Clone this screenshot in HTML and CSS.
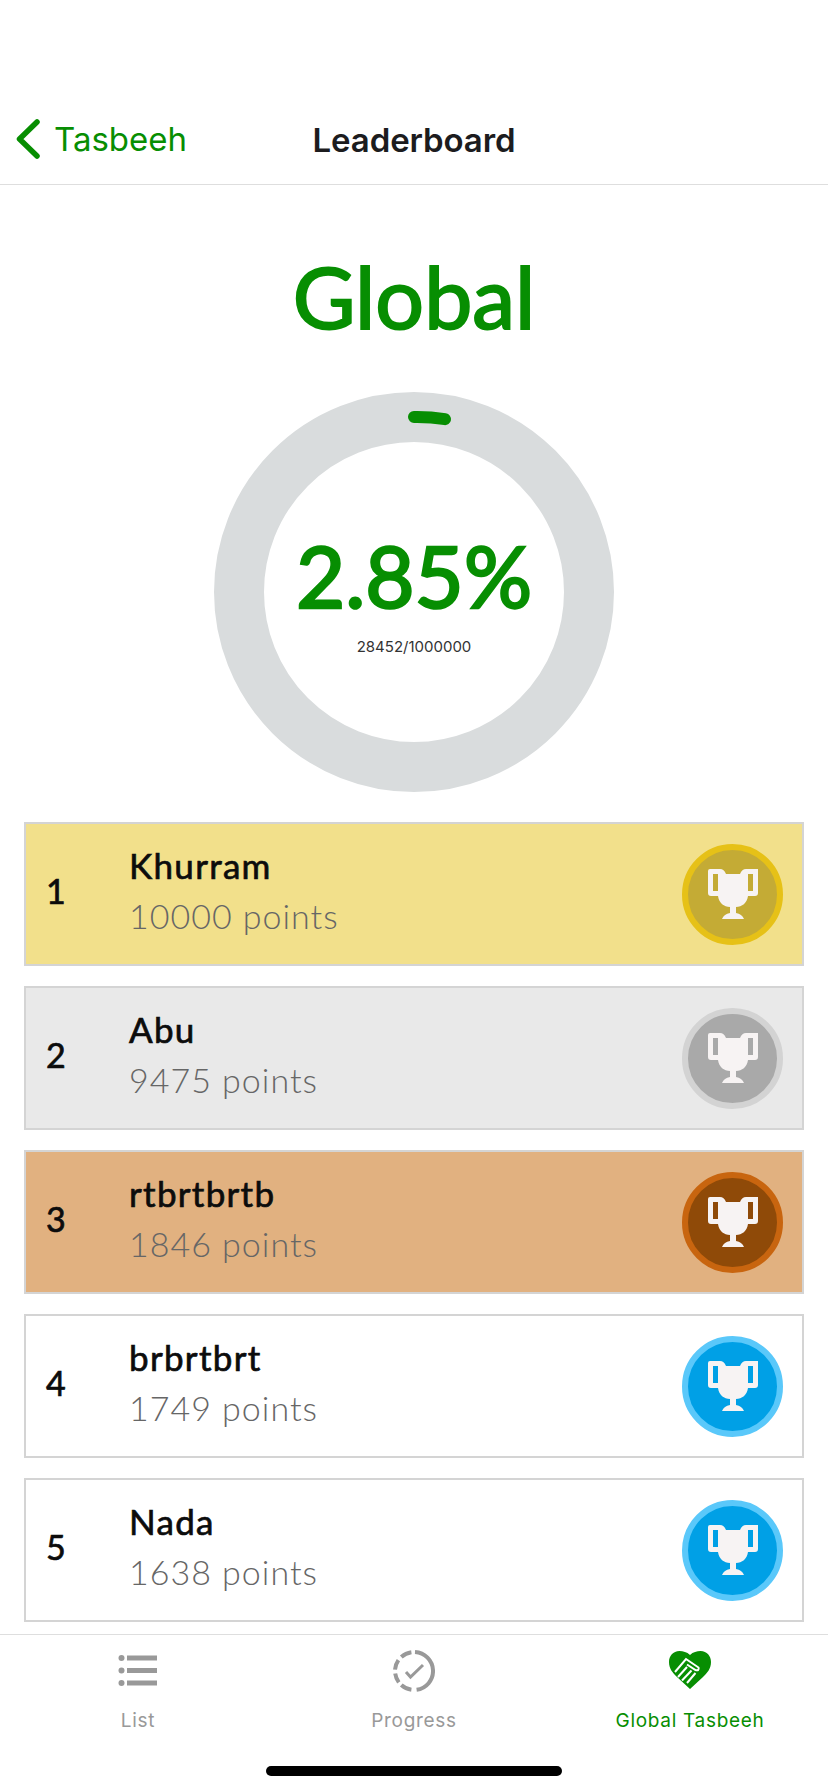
FILE: index.html
```html
<!DOCTYPE html>
<html lang="en">
<head>
    <meta charset="UTF-8">
    <meta name="viewport" content="width=device-width, initial-scale=1.0">
    <title>Leaderboard</title>
    <link rel="stylesheet" href="styles.css">
</head>
<body>
    <svg class="defs" width="0" height="0">
        <symbol id="trophy" viewBox="0 0 50 50">
            <path fill-rule="evenodd" d="M2 0H12Q16 0 18 5H32Q34 0 38 0H50V24Q50 27 47 27H40C39 34 34 38 28 38V44Q34 45 36 50H14Q16 45 22 44V38C16 38 11 34 10 27H3Q0 27 0 24V2Q0 0 2 0ZM5 5V22H10V5ZM40 5V22H45V5Z"/>
        </symbol>
    </svg>

    <header class="nav">
        <a class="nav-back">
            <svg class="chevron" viewBox="0 0 24 40"><path d="M21 3L3.500 20L21 37"/></svg>
            <span>Tasbeeh</span>
        </a>
        <h1 class="nav-title">Leaderboard</h1>
    </header>

    <main class="content">
        <h2 class="heading">Global</h2>

        <section class="ring">
            <svg class="ring-chart" viewBox="0 0 400 400">
                <circle class="ring-track" cx="200" cy="200" r="175"/>
                <path class="ring-value" d="M200 25A175 175 0 0 1 231 27.2"/>
            </svg>
            <div class="ring-text">
                <div class="ring-percent">2.85%</div>
                <div class="ring-count">28452/1000000</div>
            </div>
        </section>

        <ul class="board">
            <li class="row gold">
                <span class="rank">1</span>
                <div class="player">
                    <div class="player-name">Khurram</div>
                    <div class="player-points">10000 points</div>
                </div>
                <span class="medal"><svg><use href="#trophy"/></svg></span>
            </li>
            <li class="row silver">
                <span class="rank">2</span>
                <div class="player">
                    <div class="player-name">Abu</div>
                    <div class="player-points">9475 points</div>
                </div>
                <span class="medal"><svg><use href="#trophy"/></svg></span>
            </li>
            <li class="row bronze">
                <span class="rank">3</span>
                <div class="player">
                    <div class="player-name">rtbrtbrtb</div>
                    <div class="player-points">1846 points</div>
                </div>
                <span class="medal"><svg><use href="#trophy"/></svg></span>
            </li>
            <li class="row">
                <span class="rank">4</span>
                <div class="player">
                    <div class="player-name">brbrtbrt</div>
                    <div class="player-points">1749 points</div>
                </div>
                <span class="medal"><svg><use href="#trophy"/></svg></span>
            </li>
            <li class="row">
                <span class="rank">5</span>
                <div class="player">
                    <div class="player-name">Nada</div>
                    <div class="player-points">1638 points</div>
                </div>
                <span class="medal"><svg><use href="#trophy"/></svg></span>
            </li>
        </ul>
    </main>

    <footer class="tabs">
        <div class="tab">
            <svg class="tab-icon" viewBox="0 0 42 42">
                <g fill="#999">
                    <ellipse cx="4.5" cy="8" rx="3" ry="3"/>
                    <ellipse cx="4.5" cy="20.5" rx="3" ry="3"/>
                    <ellipse cx="4.5" cy="33" rx="3" ry="3"/>
                    <rect x="10" y="5.5" width="30" height="5"/>
                    <rect x="10" y="18" width="30" height="5"/>
                    <rect x="10" y="30.5" width="30" height="5"/>
                </g>
            </svg>
            <span>List</span>
        </div>
        <div class="tab">
            <svg class="tab-icon" viewBox="0 0 42 42">
                <path fill="none" stroke="#999" stroke-width="4" d="M22 2A19 19 0 0 1 23.6 39.8M18.4 39.8A19 19 0 0 1 8.3 35.1M5.8 32.4A19 19 0 0 1 2.2 23.6M2 19.7A19 19 0 0 1 5.4 10.1M8.3 6.9A19 19 0 0 1 18.4 2.2"/>
                <path fill="none" stroke="#999" stroke-width="3" d="M13 22L17.5 27L30 15"/>
            </svg>
            <span>Progress</span>
        </div>
        <div class="tab active">
            <svg class="tab-icon" viewBox="0 0 42 42">
                <path fill="#078e02" d="M21 5C18 2 14 1 10.500 1C4 1 0 6 0 12C0 19 4 23 8 27L21 39L34 27C38 23 42 19 42 12C42 6 38 1 31.500 1C28 1 24 2 21 5Z"/>
                <g fill="none" stroke="#fff" stroke-width="2">
                    <path d="M6 22L17 9L29.500 17.500Q30.500 21 26.500 20L18 14.500"/>
                    <path d="M18 17L9 27"/>
                    <path d="M22.500 20.500L13 30.500"/>
                    <path d="M26.500 23L18 33"/>
                </g>
            </svg>
            <span>Global Tasbeeh</span>
        </div>
    </footer>
    <div class="home-bar"></div>
</body>
</html>
```

FILE: styles.css
```css
/* General Styles */
body {
    font-family: "Inter", "Liberation Sans", sans-serif;
    margin: 0;
    padding: 0;
    height: 1792px;
    background-color: #fff;
    display: flex;
    flex-direction: column;
    position: relative;
    overflow: hidden;
}
.defs {
    position: absolute;
}

/* Nav bar */
.nav {
    height: 84px;
    padding-top: 100px;
    border-bottom: 1px solid #dedede;
    position: relative;
    display: flex;
    align-items: center;
    justify-content: center;
}
.nav-back {
    position: absolute;
    left: 16px;
    top: 119px;
    display: flex;
    align-items: center;
    gap: 14px;
    color: #078e02;
    font-size: 33px;
    line-height: 40px;
}
.chevron {
    width: 24px;
    height: 40px;
    fill: none;
    stroke: #078e02;
    stroke-width: 5.5;
    stroke-linecap: round;
    stroke-linejoin: round;
}
.nav-title {
    margin: 0 0 4px;
    font-size: 33px;
    font-weight: 600;
    letter-spacing: -0.1px;
    color: #1c1c1e;
}

/* Top of the page */
.content {
    flex: 1;
    padding: 0 24px;
}
.heading {
    margin: 56px 0 41px;
    text-align: center;
    font-family: "Lato", sans-serif;
    font-size: 86px;
    font-weight: 400;
    -webkit-text-stroke: 2px #078e02;
    line-height: 110px;
    color: #078e02;
}
.ring {
    display: grid;
    justify-content: center;
    align-items: center;
    justify-items: center;
}
.ring-chart,
.ring-text {
    grid-area: 1 / 1;
}
.ring-chart {
    width: 400px;
    height: 400px;
    display: block;
}
.ring-track {
    fill: none;
    stroke: #d9dcdd;
    stroke-width: 50;
}
.ring-value {
    fill: none;
    stroke: #078e02;
    stroke-width: 12;
    stroke-linecap: round;
}
.ring-text {
    text-align: center;
}
.ring-percent {
    font-family: "Lato", sans-serif;
    font-size: 85px;
    font-weight: 400;
    -webkit-text-stroke: 2.5px #078e02;
    line-height: 96px;
    color: #078e02;
}
.ring-count {
    font-size: 15px;
    line-height: 20px;
    margin-top: 14px;
    color: #333;
}

/* Leaderboard */
.board {
    list-style: none;
    margin: 30px 0 0;
    padding: 0;
    display: flex;
    flex-direction: column;
    gap: 20px;
}
.row {
    height: 144px;
    box-sizing: border-box;
    border: 2px solid #d4d4d4;
    background-color: #fff;
    display: flex;
    align-items: center;
    padding: 0 19px 0 20px;
    font-family: "Lato", sans-serif;
}
.rank {
    width: 83px;
    padding-bottom: 7px;
    font-size: 34px;
    -webkit-text-stroke: 0.7px #0c0c0c;
    color: #0c0c0c;
}
.player {
    flex: 1;
    padding-bottom: 5px;
}
.player-name {
    margin-bottom: 2px;
    font-size: 35px;
    letter-spacing: 1.3px;
    -webkit-text-stroke: 0.7px #0c0c0c;
    line-height: 47px;
    color: #0c0c0c;
}
.player-points {
    font-size: 34px;
    font-weight: 300;
    letter-spacing: 1px;
    line-height: 50px;
    color: #666;
}
.medal {
    width: 101px;
    height: 101px;
    box-sizing: border-box;
    border: 6px solid #5ac8fa;
    border-radius: 50%;
    background-color: #00a0e6;
    display: flex;
    align-items: center;
    justify-content: center;
}
.medal svg {
    width: 50px;
    height: 50px;
    fill: #f7f3f3;
}
.gold {
    background-color: #f2e08b;
}
.gold .medal {
    border-color: #e6c117;
    background-color: #c4ab35;
}
.silver {
    background-color: #e9e9e9;
}
.silver .medal {
    border-color: #d3d3d3;
    background-color: #a9a9a9;
}
.bronze {
    background-color: #e1b180;
}
.bronze .medal {
    border-color: #c8650f;
    background-color: #8f4a08;
}

/* Tab bar */
.tabs {
    height: 157px;
    border-top: 1px solid #dedede;
    display: grid;
    grid-template-columns: repeat(3, 1fr);
}
.tab {
    display: flex;
    flex-direction: column;
    align-items: center;
    padding-top: 15px;
    font-size: 19px;
    letter-spacing: 0.7px;
    color: #999;
}
.tab-icon {
    width: 42px;
    height: 42px;
    margin-bottom: 17px;
}
.tab.active {
    color: #078e02;
}
.home-bar {
    position: absolute;
    left: 266px;
    bottom: 16px;
    width: 296px;
    height: 10px;
    border-radius: 5px;
    background-color: #000;
}
```
